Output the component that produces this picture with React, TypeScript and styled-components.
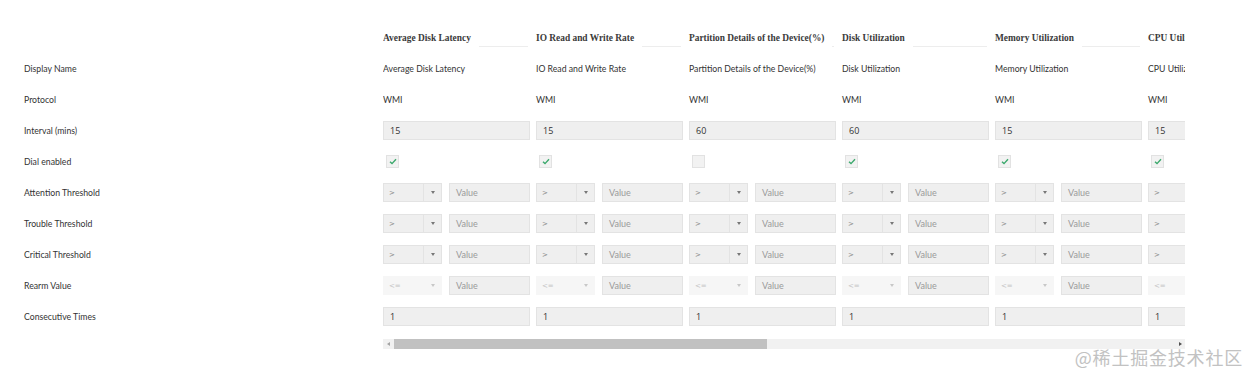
import React from "react";
import styled, { createGlobalStyle } from "styled-components";

const GlobalStyle = createGlobalStyle`
  html, body { margin: 0; padding: 0; background: #ffffff; }
  body { font-family: Lato, "Open Sans", "Liberation Sans", sans-serif; color: #333; }
`;

type Monitor = {
  name: string;
  interval: string;
  dial: boolean;
};

const monitors: Monitor[] = [
  { name: "Average Disk Latency", interval: "15", dial: true },
  { name: "IO Read and Write Rate", interval: "15", dial: true },
  { name: "Partition Details of the Device(%)", interval: "60", dial: false },
  { name: "Disk Utilization", interval: "60", dial: true },
  { name: "Memory Utilization", interval: "15", dial: true },
  { name: "CPU Utilization", interval: "15", dial: true },
  { name: "Network Interface Traffic", interval: "15", dial: true },
  { name: "Disk I/O Statistics", interval: "15", dial: true },
  { name: "Response Time", interval: "5", dial: true },
  { name: "Packet Loss", interval: "5", dial: true },
  { name: "Process Count", interval: "15", dial: false },
];

const labels = [
  "Display Name",
  "Protocol",
  "Interval (mins)",
  "Dial enabled",
  "Attention Threshold",
  "Trouble Threshold",
  "Critical Threshold",
  "Rearm Value",
  "Consecutive Times",
];

const Page = styled.div`
  position: relative;
  display: flex;
  width: 1250px;
  height: 375px;
  padding-top: 22px;
  box-sizing: border-box;
  overflow: hidden;
`;

const LabelColumn = styled.div`
  display: flex;
  flex-direction: column;
  width: 359px;
  padding-left: 24px;
  flex-shrink: 0;
`;

const Row = styled.div`
  height: 31px;
  display: flex;
  align-items: center;
  font-size: 8.7px;
  color: #333;
  white-space: nowrap;
`;

const ScrollArea = styled.div`
  display: flex;
  flex-direction: column;
  width: 802px;
  flex-shrink: 0;
`;

const Viewport = styled.div`
  width: 802px;
  overflow: hidden;
`;

const Track = styled.div`
  display: flex;
`;

const Column = styled.div`
  width: 153px;
  flex-shrink: 0;
  display: flex;
  flex-direction: column;
`;

const Cell = styled.div`
  height: 31px;
  width: 147px;
  display: flex;
  align-items: center;
  font-size: 8.7px;
  color: #333;
  white-space: nowrap;
`;

const HeaderInner = styled.div`
  width: 145px;
  height: 19px;
  display: flex;
  align-items: center;
`;

const HeaderText = styled.span`
  font-family: "Liberation Serif", "DejaVu Serif", serif;
  font-size: 9.4px;
  font-weight: 700;
  color: #3a3a3a;
  white-space: nowrap;
`;

const HeaderRule = styled.span`
  flex: 1;
  align-self: flex-end;
  height: 1px;
  background: #ededed;
  margin-left: 8px;
`;

const Field = styled.div<{ $width?: number }>`
  box-sizing: border-box;
  width: ${(p) => (p.$width ? `${p.$width}px` : "147px")};
  height: 19px;
  background: #efefef;
  border: 1px solid #e3e3e3;
  display: flex;
  align-items: center;
  padding-left: 6px;
  font-family: "Open Sans", Lato, sans-serif;
  font-size: 9px;
  color: #333;
`;

const Placeholder = styled.span`
  font-family: Lato, sans-serif;
  color: #9a9a9a;
  font-size: 9px;
`;

const Threshold = styled.div`
  display: flex;
  gap: 7px;
`;

const Select = styled.div<{ $disabled?: boolean }>`
  box-sizing: border-box;
  width: 59px;
  height: 19px;
  display: flex;
  background: ${(p) => (p.$disabled ? "#f6f6f6" : "#efefef")};
  border: 1px solid ${(p) => (p.$disabled ? "#f6f6f6" : "#e3e3e3")};
`;

const SelectValue = styled.div<{ $disabled?: boolean }>`
  flex: 1;
  display: flex;
  align-items: center;
  padding-left: 5px;
  font-size: 7px;
  color: ${(p) => (p.$disabled ? "#c4c4c4" : "#888")};
  font-family: "DejaVu Sans", sans-serif;
`;

const SelectArrow = styled.div<{ $disabled?: boolean }>`
  width: 17px;
  display: flex;
  align-items: center;
  justify-content: center;
  border-left: 1px solid ${(p) => (p.$disabled ? "#f6f6f6" : "#e3e3e3")};
  &::after {
    content: "";
    border-left: 2.5px solid transparent;
    border-right: 2.5px solid transparent;
    border-top: 3px solid ${(p) => (p.$disabled ? "#c8c8c8" : "#777")};
  }
`;

const Check = styled.div`
  box-sizing: border-box;
  width: 13px;
  height: 13px;
  margin-left: 3px;
  background: #f2f2f2;
  border: 1px solid #e2e2e2;
  display: flex;
  align-items: center;
  justify-content: center;
`;

const Scrollbar = styled.div`
  display: flex;
  align-items: center;
  height: 10px;
  margin-top: 7px;
  background: #f1f1f1;
`;

const ScrollButton = styled.div<{ $dir: "left" | "right" }>`
  width: 10px;
  height: 10px;
  display: flex;
  align-items: center;
  justify-content: center;
  &::after {
    content: "";
    border-top: 2.5px solid transparent;
    border-bottom: 2.5px solid transparent;
    ${(p) =>
      p.$dir === "left"
        ? "border-right: 3px solid #a3a3a3;"
        : "border-left: 3px solid #505050;"}
  }
`;

const ScrollThumb = styled.div`
  width: 373px;
  height: 10px;
  background: #c1c1c1;
  margin-left: 1px;
`;

const ScrollSpacer = styled.div`
  flex: 1;
`;

const Watermark = styled.div`
  position: absolute;
  right: 7px;
  bottom: 5px;
  font-family: "Noto Sans CJK SC", sans-serif;
  font-size: 18px;
  color: #c2c2c2;
  letter-spacing: 0.8px;
`;

const CheckMark = () => (
  <svg width="8" height="7" viewBox="0 0 8 7">
    <path d="M1 3.8 L3 5.6 L7 1.2" fill="none" stroke="#3aa86b" strokeWidth="1.4" />
  </svg>
);

const ThresholdCell = ({ op, disabled }: { op: string; disabled?: boolean }) => (
  <Cell>
    <Threshold>
      <Select $disabled={disabled}>
        <SelectValue $disabled={disabled}>{op}</SelectValue>
        <SelectArrow $disabled={disabled} />
      </Select>
      <Field $width={81}>
        <Placeholder>Value</Placeholder>
      </Field>
    </Threshold>
  </Cell>
);

export default function App() {
  return (
    <>
      <GlobalStyle />
      <Page>
        <LabelColumn>
          <Row />
          {labels.map((l) => (
            <Row key={l}>{l}</Row>
          ))}
        </LabelColumn>
        <ScrollArea>
          <Viewport>
            <Track>
              {monitors.map((m) => (
                <Column key={m.name}>
                  <Cell>
                    <HeaderInner>
                      <HeaderText>{m.name}</HeaderText>
                      <HeaderRule />
                    </HeaderInner>
                  </Cell>
                  <Cell>{m.name}</Cell>
                  <Cell>WMI</Cell>
                  <Cell>
                    <Field>{m.interval}</Field>
                  </Cell>
                  <Cell>
                    <Check>{m.dial && <CheckMark />}</Check>
                  </Cell>
                  <ThresholdCell op=">" />
                  <ThresholdCell op=">" />
                  <ThresholdCell op=">" />
                  <ThresholdCell op="<=" disabled />
                  <Cell>
                    <Field>1</Field>
                  </Cell>
                </Column>
              ))}
            </Track>
          </Viewport>
          <Scrollbar>
            <ScrollButton $dir="left" />
            <ScrollThumb />
            <ScrollSpacer />
            <ScrollButton $dir="right" />
          </Scrollbar>
        </ScrollArea>
        <Watermark>@稀土掘金技术社区</Watermark>
      </Page>
    </>
  );
}
